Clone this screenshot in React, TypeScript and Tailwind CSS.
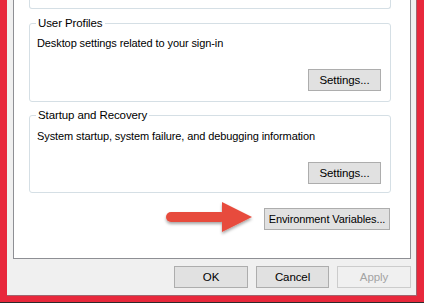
import React from 'react';

const FONT = { fontFamily: '"Liberation Sans", Arial, sans-serif' };

function WinButton({
  label,
  width,
  disabled = false,
  size = 'text-[11.5px]',
}: {
  label: string;
  width: string;
  disabled?: boolean;
  size?: string;
}) {
  return (
    <button
      disabled={disabled}
      className={
        disabled
          ? `${width} ${size} h-[22px] shrink-0 whitespace-nowrap border border-[#cccccc] bg-[#f0f0f0] leading-[20px] tracking-[-0.1px] text-[#a3a3a3]`
          : `${width} ${size} h-[22px] shrink-0 whitespace-nowrap border border-[#adadad] bg-[#e1e1e1] leading-[20px] tracking-[-0.1px] text-black`
      }
    >
      {label}
    </button>
  );
}

function GroupBox({
  title,
  desc,
  className,
  bodyPad,
}: {
  title: string;
  desc: string;
  className: string;
  bodyPad: string;
}) {
  return (
    <div
      className={`relative ml-[15px] mr-[19px] rounded-[3px] border border-[#d5dfe5] ${className}`}
    >
      <span className="absolute -top-[8px] left-[6px] bg-white px-[2px] text-[11.5px] leading-[14px] tracking-[-0.1px] text-black">
        {title}
      </span>
      <div className={`pl-[7px] ${bodyPad} text-[11px] leading-[16px] tracking-[-0.1px] text-black`}>
        {desc}
      </div>
      <div className="mt-[18px] flex justify-end pr-[9px]">
        <WinButton label="Settings..." width="w-[73px]" />
      </div>
    </div>
  );
}

function RedArrow() {
  return (
    <svg width="92" height="36" viewBox="0 0 92 36" className="-my-[7px] shrink-0 overflow-visible">
      <defs>
        <filter id="arrowShadow" x="-10%" y="-20%" width="130%" height="160%">
          <feDropShadow dx="0" dy="2" stdDeviation="1.5" floodColor="#000" floodOpacity="0.35" />
        </filter>
      </defs>
      <g filter="url(#arrowShadow)" fill="#e74c3c">
        <rect x="2" y="11" width="60" height="10" rx="5" />
        <polygon points="58,1 88,16 58,31" />
      </g>
    </svg>
  );
}

export default function App() {
  return (
    <div className="flex h-[303px] w-[424px] flex-col overflow-hidden bg-[#e8283c]" style={FONT}>
      <div className="flex">
        <div className="w-[7px] shrink-0" />
        <div className="h-[296px] w-[410px] shrink-0 border-r border-b border-[#a0646e] bg-[#f0f0f0] pl-[6px]">
          {/* tab page */}
          <div className="flex h-[259px] w-[398px] flex-col border-x border-b border-[#8e8f94] bg-white">
            <div className="ml-[15px] mr-[19px] h-[9px] rounded-b-[3px] border-x border-b border-[#d5dfe5]" />
            <GroupBox
              title="User Profiles"
              desc="Desktop settings related to your sign-in"
              className="mt-[14px] h-[79px]"
              bodyPad="pt-[11px]"
            />
            <GroupBox
              title="Startup and Recovery"
              desc="System startup, system failure, and debugging information"
              className="mt-[13px] h-[78px]"
              bodyPad="pt-[12px]"
            />
            <div className="mt-[15px] mr-[20px] flex items-center justify-end gap-[8px]">
              <RedArrow />
              <WinButton label="Environment Variables..." width="w-[126px]" size="text-[11px]" />
            </div>
          </div>
          <div className="mt-[7px] flex justify-end gap-[8px] pr-[5px]">
            <WinButton label="OK" width="w-[74px]" />
            <WinButton label="Cancel" width="w-[73px]" />
            <WinButton label="Apply" width="w-[74px]" disabled />
          </div>
        </div>
      </div>
      <div className="h-[6px] shrink-0" />
      <div className="h-[1px] shrink-0 bg-[#2b2b2b]" />
    </div>
  );
}
